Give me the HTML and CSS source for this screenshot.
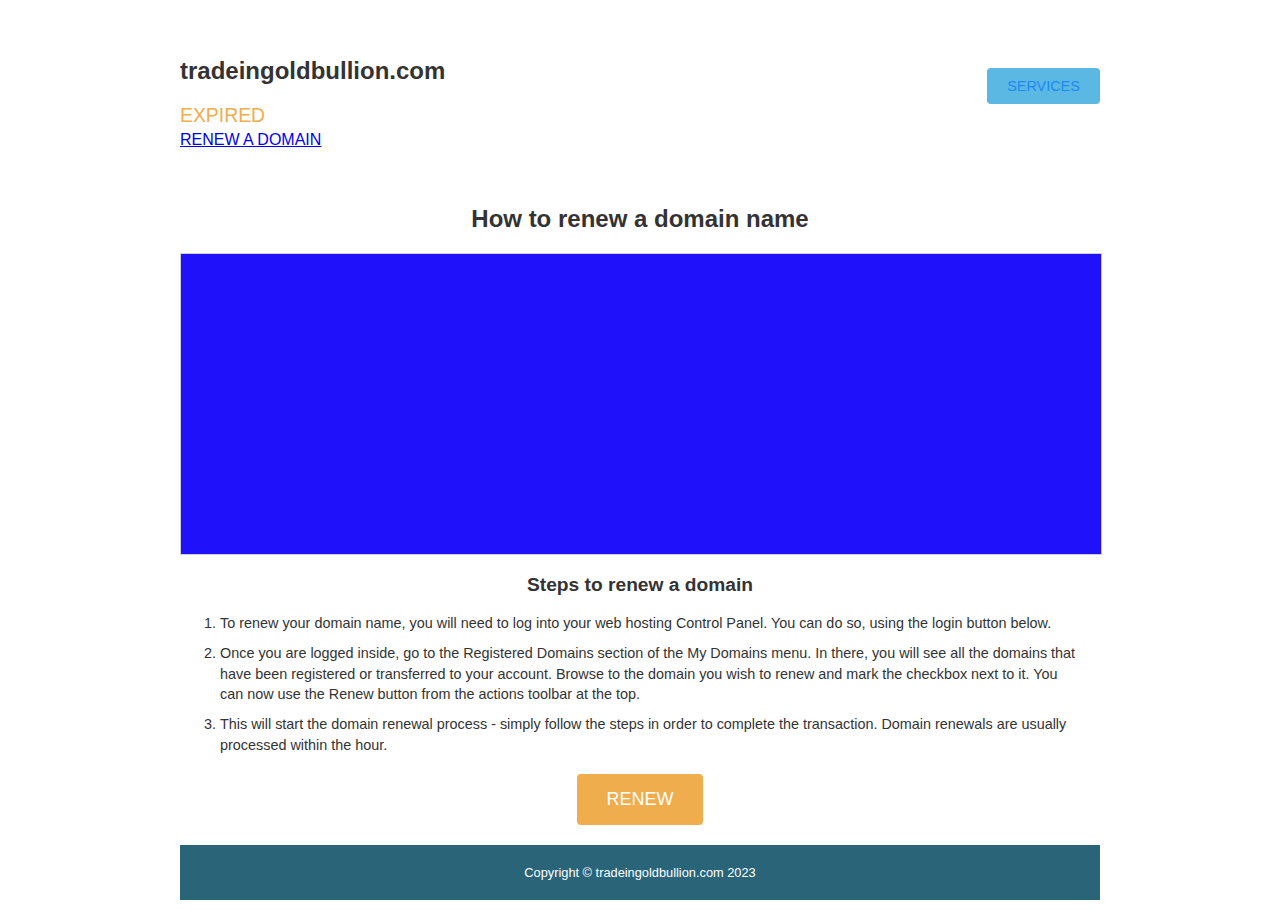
FILE: index.html
```html
<!DOCTYPE html>
<html lang="en">
<head>
<meta charset="utf-8">
<title>tradeingoldbullion.com</title>
<link rel="stylesheet" href="styles.css">
</head>
<body>
<div class="container">
  <header class="header">
    <div class="brand">
      <h1 class="site-name">tradeingoldbullion.com</h1>
      <div class="status">EXPIRED</div>
      <a class="renew-link" href="#">RENEW A DOMAIN</a>
    </div>
    <a class="services-btn" href="#">SERVICES</a>
  </header>

  <main class="content">
    <h2 class="main-title">How to renew a domain name</h2>
    <div class="hero"></div>
    <h3 class="steps-title">Steps to renew a domain</h3>
    <ol class="steps">
      <li>To renew your domain name, you will need to log into your web hosting Control Panel. You can do so, using the login button below.</li>
      <li>Once you are logged inside, go to the Registered Domains section of the My Domains menu. In there, you will see all the domains that have been registered or transferred to your account. Browse to the domain you wish to renew and mark the checkbox next to it. You can now use the Renew button from the actions toolbar at the top.</li>
      <li>This will start the domain renewal process - simply follow the steps in order to complete the transaction. Domain renewals are usually processed within the hour.</li>
    </ol>
    <div class="cta">
      <a class="renew-btn" href="#">RENEW</a>
    </div>
  </main>

  <footer class="footer">Copyright © tradeingoldbullion.com 2023</footer>
</div>
</body>
</html>
```

FILE: styles.css
```css
* { box-sizing: border-box; }

body {
  margin: 0;
  background: #fff;
  color: #333;
  font-family: "Liberation Sans", Arial, sans-serif;
}

.container {
  width: 920px;
  margin: 0 auto;
  padding-top: 55px;
}

.header {
  display: flex;
  justify-content: space-between;
  align-items: flex-start;
}

.site-name {
  margin: 0;
  font-size: 24px;
  line-height: 32px;
  font-weight: bold;
  color: #333;
}

.status {
  margin-top: 17px;
  font-size: 19.4px;
  line-height: 22px;
  color: #f0ad4e;
}

.renew-link {
  display: inline-block;
  margin-top: 4px;
  font-size: 16px;
  line-height: 20px;
  color: #0000ee;
  text-decoration: underline;
}

.services-btn {
  margin-top: 13px;
  display: block;
  width: 113px;
  height: 36px;
  line-height: 36px;
  text-align: center;
  background: #5bb8e3;
  color: #1e88f5;
  font-size: 14.4px;
  text-decoration: none;
  border-radius: 4px;
}

.content {
  padding-top: 54px;
}

.main-title {
  margin: 0;
  text-align: center;
  font-size: 24px;
  line-height: 30px;
  font-weight: bold;
  color: #333;
}

.hero {
  margin-top: 19px;
  width: 922px;
  height: 302px;
  background: #1f12fb;
  border: 1px solid #cfcfcf;
}

.steps-title {
  margin: 18px 0 0;
  text-align: center;
  font-size: 19.2px;
  line-height: 24px;
  font-weight: bold;
  color: #333;
}

.steps {
  margin: 16px 0 0;
  padding: 0 20px 0 40px;
  font-size: 14.4px;
  line-height: 20.5px;
  color: #333;
}

.steps li {
  margin-bottom: 9.5px;
}

.cta {
  display: flex;
  justify-content: center;
  margin-top: 19px;
}

.renew-btn {
  display: block;
  width: 126px;
  height: 51px;
  line-height: 51px;
  text-align: center;
  background: #f0ad4e;
  color: #fff;
  font-size: 18px;
  text-decoration: none;
  border-radius: 4px;
}

.footer {
  margin-top: 20px;
  height: 55px;
  line-height: 55px;
  text-align: center;
  background: #296479;
  color: #fff;
  font-size: 12.8px;
}
```
